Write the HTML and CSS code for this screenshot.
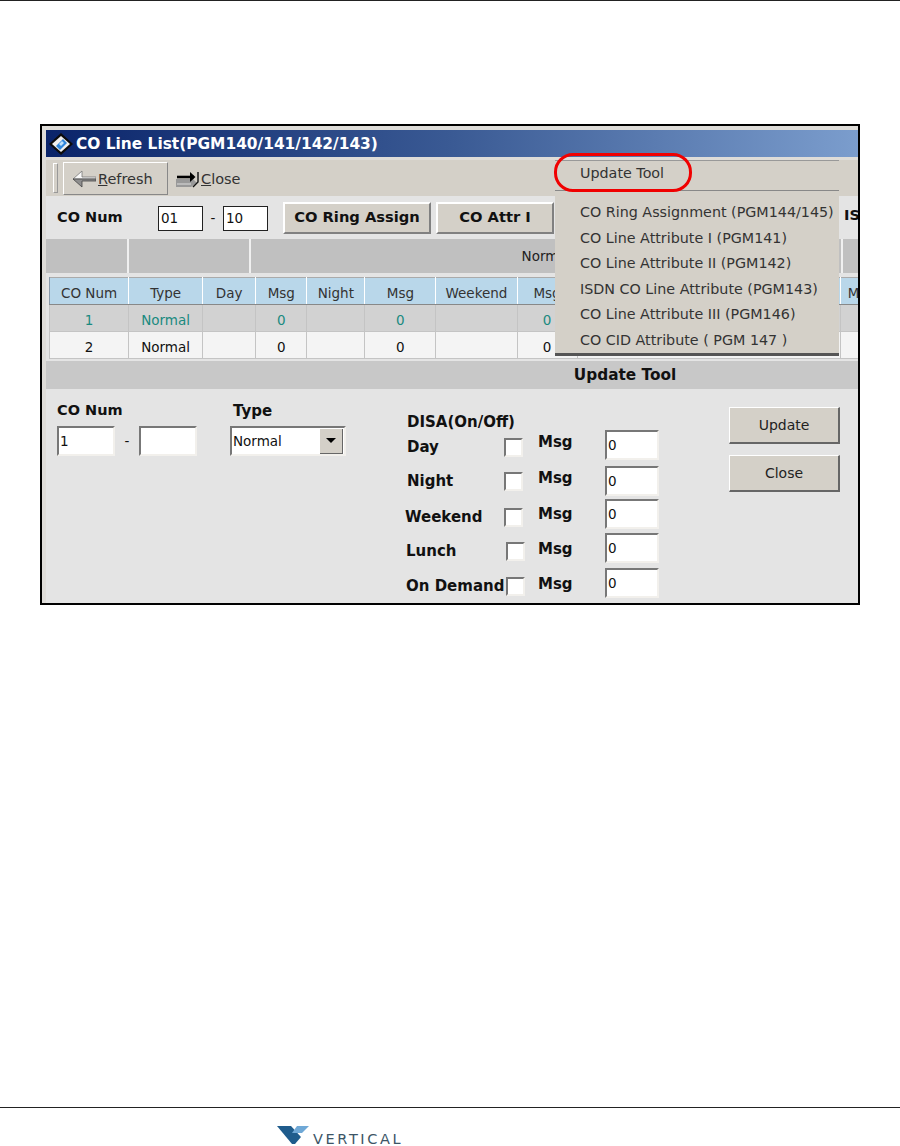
FILE: index.html
```html
<!DOCTYPE html>
<html lang="en">
<head>
    <meta charset="UTF-8">
    <title>CO Line List</title>
    <link rel="stylesheet" href="styles.css">
</head>
<body>
    <div class="top-rule"></div>

    <!-- Janela do programa -->
    <div class="window">
        <div class="titlebar">
            <svg class="title-icon" width="24" height="22" viewBox="0 0 24 22">
                <path d="M12 0 L24 11 L12 22 L0 11 Z" fill="#0c0c0c"/>
                <path d="M12 3 L21 11 L12 19 L3 11 Z" fill="#f0f0f0"/>
                <path d="M14 6 L18 10 L11 17 L7 13 Z" fill="#2f86dc"/>
                <path d="M13 8 L15 10 L12 13 L10 11 Z" fill="#bfe0fa"/>
            </svg>
            <span>CO Line List(PGM140/141/142/143)</span>
        </div>

        <div class="toolbar">
            <div class="grip"></div>
            <div class="tool-btn raised">
                <svg width="24" height="18" viewBox="0 0 24 18">
                    <path d="M1 9 L10 1 L10 7 L24 7 L24 9 Z" fill="#f8f8f8" stroke="#777" stroke-width="0.8"/>
                    <path d="M1 9 L24 9 L24 11 L10 11 L10 17 Z" fill="#8e8e8e" stroke="#444" stroke-width="0.8"/>
                </svg>
                <span><u>R</u>efresh</span>
            </div>
            <div class="tool-btn">
                <svg width="23" height="18" viewBox="0 0 23 18">
                    <path d="M0 9 H17 L21 13 L15 17 H0 Z" fill="#999"/>
                    <path d="M1 14 H15" stroke="#ddd" stroke-width="1"/>
                    <path d="M1 7 H18" stroke="#000" stroke-width="2.6"/>
                    <path d="M14 2 L19.5 7 L14 12 Z" fill="#000"/>
                    <path d="M22 2 V12 L17 17" fill="none" stroke="#111" stroke-width="1.4"/>
                </svg>
                <span><u>C</u>lose</span>
            </div>
        </div>

        <div class="filter-row">
            <b class="filter-label">CO Num</b>
            <div class="box filter-box">01</div>
            <span class="dash">-</span>
            <div class="box filter-box">10</div>
            <div class="btn-bold ring">CO Ring Assign</div>
            <div class="btn-bold attr1">CO Attr I</div>
            <div class="btn-bold attr2"></div>
            <div class="btn-bold isdn">ISDN</div>
        </div>

        <div class="group-row">
            <div class="group g1"></div>
            <div class="group g2"></div>
            <div class="group g3">Normal</div>
            <div class="group g4"></div>
        </div>

        <div class="table-wrap">
            <table class="lines">
                <tr>
                    <th class="c-num">CO Num</th>
                    <th class="c-type">Type</th>
                    <th class="c-day">Day</th>
                    <th class="c-msg1">Msg</th>
                    <th class="c-night">Night</th>
                    <th class="c-msg2">Msg</th>
                    <th class="c-week">Weekend</th>
                    <th class="c-msg3">Msg</th>
                    <th class="c-hidden"></th>
                    <th class="c-last">Msg</th>
                </tr>
                <tr class="selected">
                    <td>1</td><td>Normal</td><td></td><td>0</td><td></td><td>0</td><td></td><td>0</td><td></td><td></td>
                </tr>
                <tr>
                    <td>2</td><td>Normal</td><td></td><td>0</td><td></td><td>0</td><td></td><td>0</td><td></td><td></td>
                </tr>
            </table>
        </div>

        <div class="update-head">Update Tool</div>

        <div class="update-form">
            <div class="col-num">
                <b class="num-label">CO Num</b>
                <div class="num-inputs">
                    <div class="box sunken num-box">1</div>
                    <span class="dash wide">-</span>
                    <div class="box sunken num-box"></div>
                </div>
            </div>
            <div class="col-type">
                <b>Type</b>
                <div class="box sunken type-box">
                    <span>Normal</span>
                    <div class="arrow-btn"><i></i></div>
                </div>
            </div>
            <div class="col-disa">
                <b class="disa-title">DISA(On/Off)</b>
                <div class="disa-row day">
                    <b class="disa-name">Day</b><div class="check"></div><b class="msg">Msg</b><div class="box sunken msg-box">0</div>
                </div>
                <div class="disa-row night">
                    <b class="disa-name">Night</b><div class="check"></div><b class="msg">Msg</b><div class="box sunken msg-box">0</div>
                </div>
                <div class="disa-row weekend">
                    <b class="disa-name">Weekend</b><div class="check"></div><b class="msg">Msg</b><div class="box sunken msg-box">0</div>
                </div>
                <div class="disa-row lunch">
                    <b class="disa-name">Lunch</b><div class="check"></div><b class="msg">Msg</b><div class="box sunken msg-box">0</div>
                </div>
                <div class="disa-row demand">
                    <b class="disa-name">On Demand</b><div class="check"></div><b class="msg">Msg</b><div class="box sunken msg-box">0</div>
                </div>
            </div>
            <div class="col-buttons">
                <div class="btn-plain">Update</div>
                <div class="btn-plain">Close</div>
            </div>
        </div>

        <!-- Menu aberto por cima da janela -->
        <div class="popup">
            <div class="popup-item top">Update Tool</div>
            <div class="popup-sep"></div>
            <div class="popup-item">CO Ring Assignment (PGM144/145)</div>
            <div class="popup-item">CO Line Attribute I (PGM141)</div>
            <div class="popup-item">CO Line Attribute II (PGM142)</div>
            <div class="popup-item">ISDN CO Line Attribute (PGM143)</div>
            <div class="popup-item">CO Line Attribute III (PGM146)</div>
            <div class="popup-item">CO CID Attribute ( PGM 147 )</div>
        </div>
        <div class="red-oval"></div>
    </div>

    <footer class="footer">
        <svg class="logo" width="32" height="18" viewBox="0 0 32 18">
            <path d="M0 0 H14 L24 11 L18 18 H15 Z" fill="#1f5c8c"/>
            <path d="M20 0 H32 L25 7 H15 Z" fill="#6fa8d6"/>
        </svg>
        <span class="brand">VERTICAL</span>
    </footer>
</body>
</html>
```

FILE: styles.css
```css
body {
    margin: 0;
    height: 1146px;
    display: flex;
    flex-direction: column;
    overflow: hidden;
    background-color: #ffffff;
    font-family: "DejaVu Sans", sans-serif;
    font-size: 13.5px;
    color: #111;
}
b {
    font-size: 15px;
    font-weight: bold;
}
.top-rule {
    height: 1px;
    background-color: #222;
}

/* Janela */
.window {
    position: relative;
    width: 812px;
    height: 477px;
    margin: 123px 0 0 40px;
    padding-left: 4px;
    border: 2px solid #000;
    background-color: #dedcd8;
    overflow: hidden;
}
.titlebar {
    height: 27px;
    margin-top: 4px;
    display: flex;
    align-items: center;
    gap: 3px;
    padding-left: 3px;
    background: linear-gradient(to right, #0a246a, #3a5a94 50%, #7b9dcd);
    color: #fff;
    font-size: 15.4px;
    font-weight: bold;
    white-space: nowrap;
}
.title-icon {
    flex: none;
}
.toolbar {
    height: 36px;
    margin-top: 3px;
    display: flex;
    align-items: center;
    background-color: #d4d0c8;
}
.grip {
    width: 3px;
    height: 28px;
    margin: 0 5px 0 7px;
    border: 1px solid #999;
    border-left-color: #fff;
    border-top-color: #fff;
}
.tool-btn {
    height: 33px;
    display: flex;
    align-items: center;
    gap: 2px;
    padding: 1px 7px 0;
    box-sizing: border-box;
    font-size: 14.5px;
    color: #333;
}
.tool-btn.raised {
    width: 105px;
    padding-left: 8px;
    margin-right: 1px;
    border: 1px solid #888;
    border-left-color: #fff;
    border-top-color: #fff;
}

/* Linha de filtro */
.filter-row {
    height: 43px;
    display: flex;
    align-items: center;
    background-color: #e4e4e4;
    white-space: nowrap;
}
.filter-row > * {
    flex: none;
}
.filter-label {
    width: 101px;
    margin: 0 0 2px 11px;
    font-size: 14.5px;
}
.box {
    box-sizing: border-box;
    background-color: #fff;
    line-height: 22px;
    padding-left: 2px;
}
.filter-box {
    width: 45px;
    height: 25px;
    border: 1px solid #222;
    margin-top: 1px;
}
.dash {
    width: 20px;
    text-align: center;
}
.dash.wide {
    width: 24px;
    line-height: 30px;
}
.btn-bold {
    height: 32px;
    box-sizing: border-box;
    margin-left: 5px;
    border: 2px solid #fff;
    border-right-color: #808080;
    border-bottom-color: #808080;
    background-color: #d4d0c8;
    font-size: 14.7px;
    font-weight: bold;
    line-height: 26px;
    text-align: center;
}
.btn-bold.ring {
    width: 148px;
    margin-left: 15px;
}
.btn-bold.attr1 {
    width: 118px;
}
.btn-bold.attr2 {
    width: 119px;
}
.btn-bold.isdn {
    margin-left: 166px;
    border: none;
    background: none;
}

/* Cabeçalho de grupos */
.group-row {
    height: 34px;
    display: flex;
    gap: 2px;
    background-color: #f0f0f0;
}
.group {
    flex: none;
    background-color: #c0c0c0;
    text-align: center;
    line-height: 35px;
    color: #222;
}
.g1 {
    width: 81px;
}
.g2 {
    width: 120px;
}
.g3 {
    width: 590px;
}
.g4 {
    width: 30px;
}

/* Tabela */
.table-wrap {
    height: 84px;
    padding: 4px 0 0 3px;
    background-color: #e4e4e4;
    overflow: hidden;
}
.lines {
    table-layout: fixed;
    width: 834px;
    border-collapse: collapse;
    border: 1px solid #aaa;
    text-align: center;
}
.lines th {
    height: 23px;
    padding: 3px 0 0;
    background-color: #b9d7ea;
    font-weight: normal;
    color: #333;
    border-right: 1px solid #fff;
    border-left: 1px solid #8899aa;
    border-bottom: 1px solid #888;
    white-space: nowrap;
    overflow: hidden;
}
.lines td {
    height: 23px;
    padding: 3px 0 0;
    background-color: #f4f4f4;
    border: 1px solid #c4c4c4;
}
.lines .selected td {
    background-color: #d2d2d2;
    color: #1a8a80;
}
.c-num { width: 78px; }
.c-type { width: 73px; }
.c-day { width: 52px; }
.c-msg1 { width: 50px; }
.c-night { width: 57px; }
.c-msg2 { width: 70px; }
.c-week { width: 80px; }
.c-msg3 { width: 59px; }
.c-hidden { width: 262px; }
.c-last { width: 41px; }

.update-head {
    height: 28px;
    padding-left: 346px;
    background-color: #c8c8c8;
    text-align: center;
    font-size: 15.3px;
    font-weight: bold;
    line-height: 28px;
}

/* Formulário de atualização */
.update-form {
    height: 214px;
    display: flex;
    box-sizing: border-box;
    padding-top: 13px;
    background-color: #e4e4e4;
}
.sunken {
    border: 2px solid #f2f0ec;
    border-top-color: #777;
    border-left-color: #777;
}
.col-num {
    flex: none;
    width: 173px;
    margin-left: 11px;
}
.num-label {
    display: block;
    font-size: 14.5px;
}
.num-inputs {
    display: flex;
    margin-top: 8px;
}
.num-box {
    width: 58px;
    height: 30px;
    line-height: 26px;
    padding-left: 1px;
}
.col-type {
    flex: none;
    width: 177px;
    padding-left: 3px;
    box-sizing: border-box;
}
.col-type b {
    display: block;
}
.type-box {
    width: 116px;
    height: 30px;
    margin: 6px 0 0 -3px;
    padding-left: 1px;
    display: flex;
    align-items: center;
    justify-content: space-between;
}
.arrow-btn {
    width: 22px;
    height: 24px;
    margin-right: 1px;
    display: flex;
    align-items: center;
    justify-content: center;
    background-color: #d4d0c8;
    border-right: 1px solid #666;
    border-bottom: 1px solid #666;
}
.arrow-btn i {
    border: 5px solid transparent;
    border-top: 5px solid #000;
    border-bottom: 0;
}
.col-disa {
    flex: none;
    width: 322px;
    padding-top: 10px;
    box-sizing: border-box;
}
.disa-title {
    display: block;
    height: 17px;
    line-height: 20px;
}
.disa-row {
    display: flex;
    height: 30px;
}
.disa-name {
    width: 97px;
    white-space: nowrap;
    line-height: 18px;
}
.check {
    width: 19px;
    height: 19px;
    box-sizing: border-box;
    background-color: #fff;
    border: 2px solid #f2f0ec;
    border-top-color: #777;
    border-left-color: #777;
}
.msg {
    width: 67px;
    margin-left: 15px;
    line-height: 18px;
}
.msg-box {
    width: 54px;
    height: 30px;
    line-height: 26px;
    padding-left: 1px;
}

/* Cada linha do DISA fica um pouco torta, como na tela original */
.disa-row.day { margin-top: 1px; }
.disa-row.day .disa-name { margin-top: 8px; }
.disa-row.day .check { margin-top: 8px; }
.disa-row.day .msg { margin-top: 3px; }

.disa-row.night { margin-top: 6px; }
.disa-row.night .disa-name { margin-top: 6px; }
.disa-row.night .check { margin-top: 6px; }
.disa-row.night .msg { margin-top: 3px; }

.disa-row.weekend { margin-top: 3px; }
.disa-row.weekend .disa-name { margin: 9px 0 0 -2px; width: 99px; }
.disa-row.weekend .check { margin-top: 9px; }
.disa-row.weekend .msg { margin-top: 6px; }

.disa-row.lunch { margin-top: 4px; }
.disa-row.lunch .disa-name { margin: 9px 0 0 -1px; width: 100px; }
.disa-row.lunch .check { margin-top: 9px; }
.disa-row.lunch .msg { margin: 7px 0 0 13px; }

.disa-row.demand { margin-top: 5px; }
.disa-row.demand .disa-name { margin: 9px 0 0 -1px; width: 100px; }
.disa-row.demand .check { margin-top: 9px; }
.disa-row.demand .msg { margin: 7px 0 0 13px; }

.col-buttons {
    display: flex;
    flex-direction: column;
    gap: 11px;
    padding-top: 5px;
}
.btn-plain {
    width: 111px;
    height: 37px;
    box-sizing: border-box;
    border: 1px solid #fff;
    border-right: 2px solid #666;
    border-bottom: 2px solid #666;
    background-color: #d4d0c8;
    text-align: center;
    line-height: 34px;
    color: #222;
    font-size: 14px;
}

/* Menu e destaque */
.popup {
    position: absolute;
    top: 34px;
    left: 513px;
    width: 284px;
    height: 196px;
    background-color: #d4d0c8;
    color: #333;
    border-top: 1px solid #999;
    border-bottom: 3px solid #555;
    box-sizing: border-box;
    padding: 0 0 0 25px;
    font-size: 14.3px;
    white-space: nowrap;
}
.popup-item {
    height: 25.5px;
    line-height: 25.5px;
}
.popup-item.top {
    height: 24px;
    line-height: 24px;
}
.popup-sep {
    height: 1px;
    margin: 5px 0 9px -25px;
    background-color: #888;
}
.red-oval {
    position: absolute;
    top: 27px;
    left: 512px;
    width: 138px;
    height: 39px;
    box-sizing: border-box;
    border: 3.5px solid #f00000;
    border-radius: 19px;
}

/* Rodapé */
.footer {
    margin-top: auto;
    height: 39px;
    display: flex;
    align-items: flex-end;
    padding-left: 277px;
    box-sizing: border-box;
    border-top: 1px solid #222;
}
.logo {
    margin: 0 4px 2px 0;
}
.brand {
    font-size: 14.5px;
    line-height: 14px;
    letter-spacing: 2.6px;
    color: #3c5566;
}
```
